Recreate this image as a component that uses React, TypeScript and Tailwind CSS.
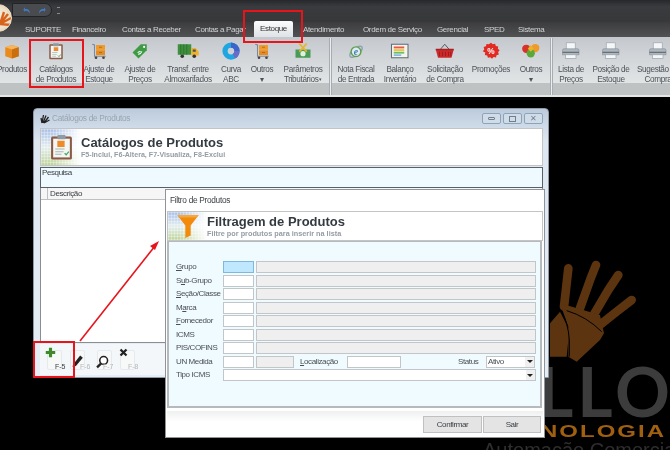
import React from "react";

const Box = ({ c = "#e88a1e" }: { c?: string }) => (
  <svg width="24" height="24" viewBox="0 0 24 24">
    <path d="M3 7l9-3 9 3v12l-9 3-9-3z" fill={c} />
    <path d="M3 7l9 3 9-3-9-3z" fill="#f6b45c" />
    <path d="M12 10v12l9-3V7z" fill="#c96f10" />
  </svg>
);
const Clip = () => (
  <svg width="24" height="24" viewBox="0 0 24 24">
    <rect x="3" y="3" width="18" height="20" rx="1.5" fill="#8a5a44" />
    <rect x="5" y="5" width="14" height="16" fill="#f3f6f4" />
    <rect x="8" y="1.5" width="8" height="4" rx="1" fill="#8f9aa3" />
    <rect x="9" y="7" width="6" height="5" fill="#ee8a2a" />
    <path d="M7 14h7M7 16.5h6M7 19h5" stroke="#a8b8b0" strokeWidth="1" />
    <path d="M14.5 18l1.5 1.5 2.5-3" stroke="#4aa860" strokeWidth="1.2" fill="none" />
  </svg>
);
const Cart = () => (
  <svg width="24" height="24" viewBox="0 0 24 24">
    <path d="M3 3l3 1v15h15" stroke="#7c8896" strokeWidth="1.4" fill="none" />
    <rect x="8" y="4" width="12" height="6.5" fill="#ef9a2a" />
    <rect x="8" y="11" width="12" height="6.5" fill="#e88a1e" />
    <path d="M12 7h4M12 14h4" stroke="#a85f10" strokeWidth="1" />
    <circle cx="8" cy="21" r="1.8" fill="#444" />
    <circle cx="18" cy="21" r="1.8" fill="#444" />
  </svg>
);
const Tag = () => (
  <svg width="24" height="24" viewBox="0 0 24 24">
    <path d="M13 3h8v8L10 22l-8-8z" fill="#3f9a44" />
    <circle cx="17.5" cy="6.5" r="1.4" fill="#fff" />
    <path d="M9 14.5c1-2 3-1 3.5-2.5M9.5 16c2 .5 4-1 5-3.5" stroke="#fff" strokeWidth="1.4" fill="none" />
  </svg>
);
const Truck = () => (
  <svg width="30" height="24" viewBox="0 0 30 24">
    <rect x="1" y="3" width="18" height="14" fill="#3f8f3f" />
    <path d="M5 3v14M9 3v14M13 3v14" stroke="#2c6e2c" strokeWidth="1" />
    <path d="M19 8h6l4 5v5H19z" fill="#eeb22a" />
    <rect x="21" y="10" width="4" height="3" fill="#456" />
    <circle cx="7" cy="19" r="2.4" fill="#333" />
    <circle cx="23" cy="19" r="2.4" fill="#333" />
  </svg>
);
const Donut = () => (
  <svg width="24" height="24" viewBox="0 0 24 24">
    <circle cx="12" cy="12" r="8" fill="none" stroke="#1da6e0" strokeWidth="7" />
    <path d="M12 4a8 8 0 0 1 8 8" fill="none" stroke="#3f63c8" strokeWidth="7" />
    <path d="M20 12a8 8 0 0 1-4 7" fill="none" stroke="#6a6ac8" strokeWidth="7" />
  </svg>
);
const Money = () => (
  <svg width="24" height="24" viewBox="0 0 24 24">
    <rect x="2" y="10" width="20" height="11" fill="#4a9a58" />
    <circle cx="12" cy="15.5" r="3.5" fill="#dff0dd" />
    <path d="M7 2l10 11M17 2L7 13" stroke="#eab42a" strokeWidth="2.4" />
  </svg>
);
const Nfe = () => (
  <svg width="26" height="26" viewBox="0 0 26 26">
    <ellipse cx="13" cy="14" rx="11" ry="5" transform="rotate(-40 13 14)" fill="none" stroke="#8aa0b4" strokeWidth="2" />
    <circle cx="13" cy="14" r="7" fill="#dceaf2" stroke="#5ea04a" strokeWidth="2" />
    <text x="13" y="19" textAnchor="middle" fontSize="14" fontStyle="italic" fontWeight="700" fill="#3f7ab0" fontFamily="Liberation Serif, serif">e</text>
  </svg>
);
const Ledger = () => (
  <svg width="26" height="24" viewBox="0 0 26 24">
    <rect x="2" y="3" width="22" height="18" fill="#f5f4ea" stroke="#5f6e78" strokeWidth="1.4" />
    <rect x="5" y="6" width="14" height="2.5" fill="#e8584a" />
    <rect x="5" y="9.5" width="14" height="2.5" fill="#f0c63c" />
    <rect x="5" y="13" width="14" height="2.5" fill="#6ac06a" />
    <rect x="5" y="16.5" width="10" height="2" fill="#7ab0e0" />
  </svg>
);
const Basket = () => (
  <svg width="26" height="24" viewBox="0 0 26 24">
    <path d="M7 10l6-7 6 7" fill="none" stroke="#4f5660" strokeWidth="1.3" />
    <path d="M1 10h24l-3 11H4z" fill="#cc2a2a" />
    <path d="M6 13v6M10 13v6M14 13v6M18 13v6M21 13v6" stroke="#8f1818" strokeWidth="1" />
    <rect x="1" y="9" width="24" height="2" fill="#a82020" />
  </svg>
);
const Promo = () => (
  <svg width="26" height="26" viewBox="0 0 26 26">
    <path d="M13 1l2.6 2.4 3.3-1 1.1 3.3 3.4.7-.5 3.4 2.6 2.2-2.2 2.6 1 3.3-3.3 1.1-.8 3.4-3.4-.6-2.4 2.5-2.5-2.4-3.3.9-1.1-3.3-3.4-.8.6-3.4L1 13.2l2.3-2.5-.9-3.3 3.3-1.2.8-3.4 3.4.6z" fill="#e02a22" />
    <text x="13" y="17.5" textAnchor="middle" fontSize="12" fontWeight="700" fill="#fff" fontFamily="Liberation Sans, sans-serif">%</text>
  </svg>
);
const Hearts = () => (
  <svg width="26" height="24" viewBox="0 0 26 24">
    <circle cx="7" cy="9" r="5.5" fill="#d8322a" />
    <circle cx="19" cy="8" r="5.5" fill="#ef9a2a" />
    <circle cx="13" cy="15" r="5.5" fill="#5aa83a" />
    <path d="M13 4l4 5-4 4-4-4z" fill="#e8b52a" />
  </svg>
);
const Printer = () => (
  <svg width="26" height="24" viewBox="0 0 26 24">
    <rect x="7" y="1" width="12" height="9" fill="#f4f6f8" stroke="#a0a8b0" />
    <path d="M2 11q0-2 2-2h18q2 0 2 2v6H2z" fill="#aeb6be" stroke="#7c858e" strokeWidth=".7" />
    <rect x="2" y="13" width="22" height="1.5" fill="#5f6870" />
    <rect x="6" y="17" width="14" height="5" fill="#f4f6f8" stroke="#a0a8b0" />
  </svg>
);

const Item = ({ w, icon, label, arrow }: { w: string; icon: React.ReactNode; label: string; arrow?: boolean }) => (
  <div className={`${w} shrink-0 flex flex-col items-center`}>
    <div className="h-[26px] flex items-center justify-center [&>svg]:h-[18px] [&>svg]:w-auto">{icon}</div>
    <div className="mt-[1px] text-center whitespace-pre text-[8.2px] tracking-[-0.35px] leading-[9.5px] text-[#4c5258]">
      {label}
      {arrow && <span className="text-[5px] align-middle"> ▾</span>}
    </div>
  </div>
);

const Sep = () => <div className="w-[3px] h-[58px] shrink-0 bg-[#eceeee] border-x border-[#a8acb0]" />;

const HeaderArt = ({ children, title, sub, h, subSize, indent }: { children: React.ReactNode; title: string; sub: string; h: string; subSize: string; indent: string }) => (
  <div className={`${h} flex items-center bg-white border border-[#c4c4c4]`}>
    <div className={`${indent} h-full shrink-0 flex items-center justify-center bg-[linear-gradient(to_right,rgba(255,255,255,0)_30%,#fff),repeating-linear-gradient(to_right,rgba(255,255,255,0.3)_0_1px,transparent_1px_3px),repeating-linear-gradient(to_bottom,rgba(255,255,255,0.3)_0_1px,transparent_1px_3px),linear-gradient(to_bottom,#a8c0e8,#e4eef0_50%,#c0d49a)]`}>
      {children}
    </div>
    <div className="flex flex-col">
      <div className="text-[13px] leading-[15px] font-bold text-[#333a40]">{title}</div>
      <div className={`${subSize} leading-[10px] font-bold text-[#949ca4]`}>{sub}</div>
    </div>
  </div>
);

const Funnel = () => (
  <svg width="26" height="25" viewBox="0 0 26 28">
    <path d="M1 1h24L16 13v11l-6 3V13z" fill="#f28a0c" />
    <path d="M1 1h24l-3 3H4z" fill="#f6a83c" />
  </svg>
);

const Field = ({ w, gray, focus }: { w: string; gray?: boolean; focus?: boolean }) => (
  <div
    className={`${w} h-[12px] shrink-0 border ${
      focus ? "border-[#7fb8dc] bg-[#bfe8ff]" : gray ? "border-[#c2c6c8] bg-[#efefef]" : "border-[#c2c6c8] bg-white"
    }`}
  />
);

const Lbl = ({ t, u }: { t: string; u?: number }) => (
  <span className="w-[44.5px] shrink-0 whitespace-nowrap text-[8px] tracking-[-0.4px] leading-[12px] text-[#4a4f54]">
    {u === undefined ? (
      t
    ) : (
      <>
        {t.slice(0, u)}
        <span className="underline">{t[u]}</span>
        {t.slice(u + 1)}
      </>
    )}
  </span>
);

const Select = ({ w, value }: { w: string; value?: string }) => (
  <div className={`${w} h-[12px] shrink-0 border border-[#c2c6c8] bg-white flex items-center justify-between pl-[1px]`}>
    <span className="text-[8px] tracking-[-0.4px] leading-[10px] text-[#4a4f54]">{value}</span>
    <span className="w-[9px] h-full flex items-center justify-center bg-[#f0f0f0]">
      <span className="w-0 h-0 border-x-[3px] border-x-transparent border-t-[3px] border-t-[#222]" />
    </span>
  </div>
);

const Row = ({ t, u }: { t: string; u?: number }) => (
  <div className="flex items-center gap-[2px]">
    <Lbl t={t} u={u} />
    <Field w="w-[31px]" />
    <Field w="w-[280px]" gray />
  </div>
);

const ToolBtn = ({ w, icon, label, labelPos, dark }: { w: string; icon: React.ReactNode; label: string; labelPos: string; dark?: boolean }) => (
  <div className={`relative ${w} h-[30px] shrink-0`}>
    <div className="absolute left-[2px] top-[6px] w-[15px] h-[20px] rounded-[2px] border border-[#e6eaec] bg-[#f7f9f9]" />
    <div className="absolute left-0 top-0">{icon}</div>
    <span className={`absolute ${labelPos} top-[18px] text-[7px] leading-[9px] ${dark ? "text-[#3a3a3a]" : "text-[#b4b8ba]"}`}>{label}</span>
  </div>
);

const Ctl = ({ children }: { children: React.ReactNode }) => (
  <div className="w-[19px] h-[11px] flex items-center justify-center rounded-[2px] border border-[#8fa3b8] bg-[#d0dce8]">{children}</div>
);

export default function App() {
  return (
    <div className="relative w-[670px] h-[450px] overflow-hidden bg-black font-['Liberation_Sans',sans-serif] blur-[0.3px]">
      {/* title bar */}
      <div className="h-[22px] flex items-start pt-[3px] bg-[linear-gradient(to_bottom,#27282c,#3a3b3e_30%,#37383a)] pl-[12px] gap-[5px]">
        <div className="w-[40px] h-[14px] flex items-center justify-center gap-[5px] rounded-r-full bg-[#4a4b4e] border border-[#232326] pl-[4px]">
          <svg width="11" height="11" viewBox="0 0 14 14"><path d="M3 6l2-3v2c4-.5 7 2 6 6-1-3-3-4-6-3.500V9z" fill="#3f7cc4" /></svg>
          <svg width="11" height="11" viewBox="0 0 14 14"><path d="M11 6L9 3v2C5 4.500 2 7 3 11c1-3 3-4 6-3.500V9z" fill="#3f7cc4" /></svg>
        </div>
        <div className="w-[3px] h-[7px] mt-[4px] border-y border-[#8a8a8a]" />
      </div>
      {/* app button */}
      <div className="absolute -left-[16px] top-[4px] w-[28px] h-[28px] rounded-full bg-[radial-gradient(circle_at_50%_50%,#f8f2e8,#efe2cc_55%,#d8c4a4)] border border-[#f0e0c0] overflow-hidden">
        <svg className="absolute left-[15px] top-[4px]" width="12" height="18" viewBox="0 0 12 18">
          <path d="M0 15L4 3M0 15L8 5M0 15L11 9M0 15l11 1" stroke="#d8641c" strokeWidth="2.400" />
        </svg>
      </div>
      {/* tabs */}
      <div className="h-[15px] flex items-end pl-[25px] bg-[linear-gradient(to_bottom,#3c3c3e,#515254)] text-[8px] tracking-[-0.35px] text-[#d0d2d4] whitespace-nowrap">
        <span className="w-[47px] leading-[14px]">SUPORTE</span>
        <span className="w-[50px] leading-[14px]">Financeiro</span>
        <span className="w-[73px] leading-[14px]">Contas a Receber</span>
        <span className="w-[59px] leading-[14px]">Contas a Pagar</span>
        <span className="w-[39px] h-[16px] text-center leading-[15px] rounded-t-[2px] text-[#333] bg-[linear-gradient(to_bottom,#fbfcfd,#dfe3e6)]">Estoque</span>
        <span className="ml-[10px] w-[60px] leading-[14px]">Atendimento</span>
        <span className="w-[74px] leading-[14px]">Ordem de Serviço</span>
        <span className="w-[47px] leading-[14px]">Gerencial</span>
        <span className="w-[34px] leading-[14px]">SPED</span>
        <span className="leading-[14px]">Sistema</span>
      </div>
      {/* ribbon */}
      <div className="relative h-[58px] flex items-start pt-[1px] overflow-hidden bg-[linear-gradient(to_bottom,#c4c8cd,#d4d7da_40%,#e2e5e6_80%)]">
        <div className="absolute left-0 right-0 bottom-0 h-[12px] bg-[#bfc2c2]" />
        <div className="relative flex -ml-[6px] items-start">
          <Item w="w-[36px]" icon={<Box />} label="Produtos" />
          <Item w="w-[52px]" icon={<Clip />} label={"Catálogos\nde Produtos"} />
          <Item w="w-[34px]" icon={<Cart />} label={"Ajuste de\nEstoque"} />
          <div className="w-[3px]" />
          <Item w="w-[42px]" icon={<Tag />} label={"Ajuste de\nPreços"} />
          <Item w="w-[54px]" icon={<Truck />} label={"Transf. entre\nAlmoxarifados"} />
          <Item w="w-[32px]" icon={<Donut />} label={"Curva\nABC"} />
          <Item w="w-[30px]" icon={<Cart />} label={"Outros\n▾"} />
          <Item w="w-[52px]" icon={<Money />} label={"Parâmetros\nTributários"} arrow />
          <Sep />
          <Item w="w-[48px]" icon={<Nfe />} label={"Nota Fiscal\nde Entrada"} />
          <Item w="w-[40px]" icon={<Ledger />} label={"Balanço\nInventário"} />
          <Item w="w-[50px]" icon={<Basket />} label={"Solicitação\nde Compra"} />
          <Item w="w-[42px]" icon={<Promo />} label="Promoções" />
          <Item w="w-[38px]" icon={<Hearts />} label={"Outros\n▾"} />
          <Sep />
          <Item w="w-[36px]" icon={<Printer />} label={"Lista de\nPreços"} />
          <Item w="w-[44px]" icon={<Printer />} label={"Posição de\nEstoque"} />
          <Item w="w-[50px]" icon={<Printer />} label={"Sugestão de\nCompra"} />
        </div>
      </div>
      <div className="h-[2px] bg-[#e4e6e6]" />

      {/* wallpaper logo */}
      <svg className="absolute left-[550px] top-[260px]" width="90" height="103.300" viewBox="450 60 270 310">
        <g stroke="#5c3410" strokeLinecap="round" strokeLinejoin="round" strokeWidth="26" fill="none">
          <path d="M505 85L492 200" />
          <path d="M588 75L572 115L540 205" />
          <path d="M655 105L625 150L575 235" />
          <path d="M695 180L650 215L600 255" />
        </g>
        <path d="M480 190L600 225L612 280L600 300L530 365L505 350L505 260z" fill="#5c3410" />
        <path d="M450 250L480 215L508 270L500 350H450z" fill="#5c3410" />
        <path d="M482 210Q505 250 508 300V350" stroke="#000" strokeWidth="3" fill="none" />
        <path d="M500 212Q560 230 605 275" stroke="#000" strokeWidth="3" fill="none" />
      </svg>
      <div className="absolute left-[538px] top-[357px] text-[#3c3c3c] text-[68px] leading-[68px] tracking-[4px] font-['Lato',sans-serif] font-bold whitespace-nowrap">LLO</div>
      <div className="absolute left-[486px] top-[421px] text-[#a0600f] text-[24px] leading-[20px] font-bold tracking-[2px] whitespace-nowrap scale-y-[0.7] origin-center">TECNOLOGIA</div>
      <div className="absolute left-[483px] top-[440px] text-[#2e2e2e] text-[20px] leading-[20px] whitespace-nowrap">Automação Comercial</div>

      {/* catalog window */}
      <div className="absolute left-[33px] top-[108px] w-[516px] h-[270px] flex flex-col rounded-t-[4px] pl-[6px] pr-[5px] pb-[2px] bg-[linear-gradient(to_bottom,#bccbdc,#dde7f1_12%,#e6edf4)] border border-[#8f9aa6]">
        <div className="h-[19px] shrink-0 flex items-center justify-between">
          <div className="flex items-center gap-[2px]">
            <svg width="10" height="10" viewBox="0 0 10 10"><path d="M2 9L1 4M2 9L3.500 1M3 9L6 1.500M4 9L8.500 3M4 9L9.500 6" stroke="#222" strokeWidth="1.300" /></svg>
            <span className="text-[8.300px] tracking-[-0.3px] text-[#9aa4ae]">Catálogos de Produtos</span>
          </div>
          <div className="flex gap-[2px]">
            <Ctl><div className="w-[7px] h-[3px] border border-[#6f7f90] rounded-[1px]" /></Ctl>
            <Ctl><div className="w-[7px] h-[6px] border border-[#6f7f90]" /></Ctl>
            <Ctl><span className="text-[8px] leading-[8px] text-[#6f7f90]">✕</span></Ctl>
          </div>
        </div>
        <HeaderArt indent="w-[40px]" h="h-[38px]" subSize="text-[7.100px]" title="Catálogos de Produtos" sub="F5-Inclui, F6-Altera, F7-Visualiza, F8-Exclui">
          <svg width="25" height="28" viewBox="0 0 24 26"><rect x="2" y="3" width="20" height="22" rx="1.500" fill="#8a5a44" /><rect x="4" y="5" width="16" height="18" fill="#f3f6f4" /><rect x="8" y="1.500" width="8" height="4" rx="1" fill="#8f9aa3" /><rect x="8" y="7" width="7" height="6" fill="#ee8a2a" /><path d="M6 15h9M6 17.500h8M6 20h6" stroke="#a8b8b0" /><path d="M15 19l1.500 1.500 2.500-3" stroke="#4aa860" strokeWidth="1.200" fill="none" /></svg>
        </HeaderArt>
        <div className="h-[21px] mt-[1px] shrink-0 border border-[#5a6066] bg-[#eefaff] pl-[1px] text-[8px] tracking-[-0.4px] leading-[10px] text-[#3c4044]">Pesquisa</div>
        <div className="h-[155px] shrink-0 border-x border-b border-[#8a8e92] bg-white">
          <div className="h-[12px] flex items-center border-b border-[#c0c0c0] bg-[#f6f6f6]">
            <div className="w-[7px] h-full border-r border-[#c0c0c0]" />
            <span className="ml-[2px] text-[8px] tracking-[-0.4px] leading-[10px] text-[#3c4044]">Descrição</span>
          </div>
        </div>
        <div className="flex-1 mt-[1px] flex items-start pl-[5px] bg-[#f3f7fa]">
          <ToolBtn
            dark
            w="w-[23px]"
            labelPos="left-[10px]"
            label="F-5"
            icon={<svg width="11" height="11" viewBox="0 0 14 14" className="mt-[3px]"><path d="M5 1h4v4h4v4H9v4H5V9H1V5h4z" fill="#3f8a2a" /></svg>}
          />
          <ToolBtn
            w="w-[27px]"
            labelPos="left-[12px]"
            label="F-6"
            icon={<svg width="15" height="16" viewBox="0 0 16 18" className="mt-[8px] ml-[2px]"><path d="M3 14L11 4l3 2.500-8 9.500z" fill="#222" /><path d="M3 14l-1 3 3-1z" fill="#888" /></svg>}
          />
          <ToolBtn
            w="w-[23px]"
            labelPos="left-[8px]"
            label="F-7"
            icon={<svg width="15" height="14" viewBox="0 0 18 18" className="mt-[11px]"><circle cx="10.500" cy="7" r="5" fill="#fff" stroke="#222" strokeWidth="2" /><path d="M7 11l-5 5" stroke="#222" strokeWidth="3" /></svg>}
          />
          <ToolBtn
            w="w-[25px]"
            labelPos="left-[10px]"
            label="F-8"
            icon={<svg width="9" height="9" viewBox="0 0 12 12" className="mt-[4px] ml-[1px]"><path d="M2 2l8 8M10 2l-8 8" stroke="#222" strokeWidth="3" /></svg>}
          />
        </div>
      </div>

      {/* filter window */}
      <div className="absolute left-[165px] top-[189px] w-[380px] h-[249px] flex flex-col px-[1px] bg-white border border-[#8e9499]">
        <div className="h-[21px] shrink-0 flex items-center pl-[3px] text-[8.300px] tracking-[-0.3px] text-[#3c4044]">Filtro de Produtos</div>
        <HeaderArt indent="w-[39px]" h="h-[30px]" subSize="text-[7.300px]" title="Filtragem de Produtos" sub="Filtre por produtos para inserir na lista">
          <Funnel />
        </HeaderArt>
        <div className="h-[167px] shrink-0 mr-[1px] border-2 border-t-[1px] border-[#b6babc] bg-[#f0fbff] pl-[7px] pt-[19px] flex flex-col gap-[1.500px]">
          <div className="flex items-center gap-[2px]">
            <Lbl t="Grupo" u={0} />
            <Field w="w-[31px]" focus />
            <Field w="w-[280px]" gray />
          </div>
          <Row t="Sub-Grupo" u={1} />
          <Row t="Seção/Classe" u={0} />
          <Row t="Marca" u={1} />
          <Row t="Fornecedor" u={0} />
          <Row t="ICMS" />
          <Row t="PIS/COFINS" />
          <div className="flex items-center">
            <Lbl t="UN Medida" />
            <div className="w-[2px]" />
            <Field w="w-[31px]" />
            <div className="w-[2px]" />
            <Field w="w-[38px]" gray />
            <span className="ml-[6.500px] w-[47px] text-[8px] tracking-[-0.4px] leading-[12px] text-[#4a4f54]"><span className="underline">L</span>ocalização</span>
            <Field w="w-[54px]" />
            <span className="ml-[57px] w-[28px] text-[8px] tracking-[-0.4px] leading-[12px] text-[#4a4f54]">Status</span>
            <Select w="w-[49px]" value="Ativo" />
          </div>
          <div className="flex items-center gap-[2px]">
            <Lbl t="Tipo ICMS" />
            <Select w="w-[313px]" />
          </div>
        </div>
        <div className="flex-1 mt-[3px] flex items-start justify-end gap-[1px] pt-[5px] pr-[2px] bg-[linear-gradient(to_bottom,#eef0f0,#fff_40%)]">
          <div className="w-[59px] h-[17px] flex items-center justify-center border border-[#c0c0c0] bg-[#e4e4e4] text-[8px] tracking-[-0.4px] text-[#3c4044]">Confirmar</div>
          <div className="w-[58px] h-[17px] flex items-center justify-center border border-[#c0c0c0] bg-[#e4e4e4] text-[8px] tracking-[-0.4px] text-[#3c4044]">Sair</div>
        </div>
      </div>

      {/* annotations */}
      <div className="absolute left-[243px] top-[10px] w-[60px] h-[33px] border-2 border-[#e8141c]" />
      <div className="absolute left-[29px] top-[39px] w-[55px] h-[49px] border-2 border-[#e8141c]" />
      <div className="absolute left-[33px] top-[341px] w-[42px] h-[37px] border-2 border-[#e8141c]" />
      <svg className="absolute left-0 top-0 pointer-events-none" width="670" height="450">
        <path d="M80 341L155 246" stroke="#e8141c" strokeWidth="1.600" />
        <path d="M159 241l-9 5 5 4z" fill="#e8141c" />
      </svg>
    </div>
  );
}
